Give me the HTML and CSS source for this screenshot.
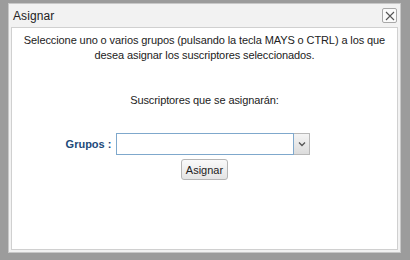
FILE: index.html
```html
<!DOCTYPE html>
<html>
<head>
<meta charset="utf-8">
<link rel="stylesheet" href="styles.css">
</head>
<body>
<div class="dialog">
  <div class="titlebar">
    <span class="title">Asignar</span>
    <span class="close"><svg width="10" height="10" viewBox="0 0 10 10"><path d="M1 1L9 9M9 1L1 9" stroke="#555" stroke-width="1.1" fill="none"/></svg></span>
  </div>
  <div class="content">
    <p class="intro">Seleccione uno o varios grupos (pulsando la tecla MAYS o CTRL) a los que<br>desea asignar los suscriptores seleccionados.</p>
    <p class="subs">Suscriptores que se asignarán:</p>
    <div class="row">
      <label class="lbl">Grupos :</label>
      <div class="select"><div class="field"></div><div class="arrow"><svg width="8" height="6" viewBox="0 0 8 6"><path d="M1 1.5L4 4.5L7 1.5" stroke="#555" stroke-width="1.3" fill="none"/></svg></div></div>
    </div>
    <div class="btnrow"><button class="btn">Asignar</button></div>
  </div>
</div>
</body>
</html>
```
FILE: styles.css
```css
html, body { margin: 0; padding: 0; }
body {
  width: 410px; height: 260px;
  background: #9c9c9c;
  font-family: "Liberation Sans", Arial, sans-serif;
  font-size: 11px;
  color: #222;
  padding: 3px 9px 7px 8px;
  box-sizing: border-box;
}
.dialog {
  height: 100%;
  background: #f2f2f2;
  border: 1px solid #c8c8c8;
  box-sizing: border-box;
  display: flex;
  flex-direction: column;
  padding: 0 2px 2px 2px;
}
.titlebar {
  height: 23px;
  display: flex;
  align-items: center;
  justify-content: space-between;
  padding: 0 1px 0 2px;
}
.title { font-size: 12px; color: #222; letter-spacing: 0.1px; }
.close {
  width: 13px; height: 13px;
  border: 1px solid #a8a8a8;
  border-radius: 2px;
  background: #fafafa;
  display: flex; align-items: center; justify-content: center;
}
.content {
  flex: 1;
  background: #fff;
  border: 1px solid #d0d0d0;
  display: flex;
  flex-direction: column;
  align-items: center;
}
.intro { margin: 5px 0 0; text-align: center; line-height: 15px; letter-spacing: -0.1px; }
.subs { margin: 31px 0 0; letter-spacing: -0.1px; }
.row { display: flex; align-items: center; margin-top: 27px; margin-left: -33px; }
.lbl { font-weight: bold; color: #1d4a7a; margin-right: 5px; }
.select { display: flex; }
.field {
  width: 176px; height: 20px;
  border: 1px solid #7fa8cc;
  background: #fff;
}
.arrow {
  width: 15px; height: 20px;
  border: 1px solid #b8b8b8;
  border-left: none;
  background: linear-gradient(#f4f4f4, #dcdcdc);
  display: flex; align-items: center; justify-content: center;
}
.btnrow { margin-top: 4px; }
.btn {
  font-family: "Liberation Sans", Arial, sans-serif;
  font-size: 11px;
  color: #222;
  height: 21px;
  padding: 0 4px;
  border: 1px solid #b5b5b5;
  border-radius: 3px;
  background: linear-gradient(#fafafa, #e4e4e4);
}
```
